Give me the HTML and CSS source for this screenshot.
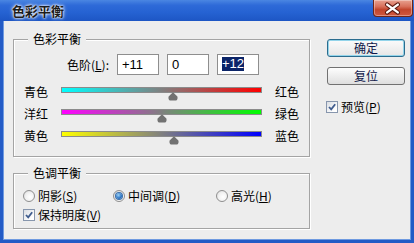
FILE: index.html
```html
<!DOCTYPE html>
<html>
<head>
<meta charset="utf-8">
<link rel="stylesheet" href="styles.css">
</head>
<body>
<div class="window">
  <div class="titlebar">
    <span class="title">色彩平衡</span>
    <div class="close">
      <svg width="40" height="17" viewBox="0 0 40 17">
        <path d="M14.5 4.5 L25.5 12.5 M25.5 4.5 L14.5 12.5" stroke="#5a1a12" stroke-width="4.5" stroke-linecap="round" fill="none"/>
        <path d="M14.5 4.5 L25.5 12.5 M25.5 4.5 L14.5 12.5" stroke="#ffffff" stroke-width="2.4" stroke-linecap="round" fill="none"/>
      </svg>
    </div>
  </div>
  <div class="frame">
    <div class="main">
      <div class="group g1">
        <div class="legend">色彩平衡</div>
        <div class="levels">
          <span class="lvl-label">色阶(<u>L</u>):</span>
          <div class="field">+11</div>
          <div class="field">0</div>
          <div class="field"><span class="sel">+12</span></div>
        </div>
        <div class="srow first">
          <span class="sl">青色</span>
          <div class="track-wrap">
            <div class="track t-cr"></div>
            <div class="thumb" style="left:55.5%"><svg width="10" height="9" viewBox="0 0 10 9"><path d="M5 0.3 L9.4 4.6 Q10.2 8.6 7 8.6 L3 8.6 Q-0.2 8.6 0.6 4.6 Z" fill="#727272"/></svg></div>
          </div>
          <span class="sr">红色</span>
        </div>
        <div class="srow">
          <span class="sl">洋红</span>
          <div class="track-wrap">
            <div class="track t-mg"></div>
            <div class="thumb" style="left:50%"><svg width="10" height="9" viewBox="0 0 10 9"><path d="M5 0.3 L9.4 4.6 Q10.2 8.6 7 8.6 L3 8.6 Q-0.2 8.6 0.6 4.6 Z" fill="#727272"/></svg></div>
          </div>
          <span class="sr">绿色</span>
        </div>
        <div class="srow">
          <span class="sl">黄色</span>
          <div class="track-wrap">
            <div class="track t-yb"></div>
            <div class="thumb" style="left:56%"><svg width="10" height="9" viewBox="0 0 10 9"><path d="M5 0.3 L9.4 4.6 Q10.2 8.6 7 8.6 L3 8.6 Q-0.2 8.6 0.6 4.6 Z" fill="#727272"/></svg></div>
          </div>
          <span class="sr">蓝色</span>
        </div>
      </div>
      <div class="group g2">
        <div class="legend">色调平衡</div>
        <div class="radios">
          <div class="ritem w1"><span class="radio"></span><span>阴影(<u>S</u>)</span></div>
          <div class="ritem w2"><span class="radio on"></span><span>中间调(<u>D</u>)</span></div>
          <div class="ritem"><span class="radio"></span><span>高光(<u>H</u>)</span></div>
        </div>
        <div class="crow">
          <span class="cbox"><svg width="10" height="10" viewBox="0 0 10 10"><path d="M2 5 L4.2 7.4 L8.2 2.2" stroke="#3f5c8e" stroke-width="1.8" fill="none"/></svg></span>
          <span>保持明度(<u>V</u>)</span>
        </div>
      </div>
    </div>
    <div class="side">
      <div class="btn default">确定</div>
      <div class="btn reset">复位</div>
      <div class="crow preview">
        <span class="cbox"><svg width="10" height="10" viewBox="0 0 10 10"><path d="M2 5 L4.2 7.4 L8.2 2.2" stroke="#3f5c8e" stroke-width="1.8" fill="none"/></svg></span>
        <span>预览(<u>P</u>)</span>
      </div>
    </div>
  </div>
</div>
</body>
</html>
```

FILE: styles.css
```css
* { box-sizing: border-box; }
html, body { margin: 0; padding: 0; }
body {
  width: 414px;
  height: 243px;
  overflow: hidden;
  font-family: "Noto Sans CJK SC", "Liberation Sans", sans-serif;
  font-size: 12px;
  color: #000;
  background: #ededed;
}
u { text-decoration: underline; text-underline-offset: 1px; }

.window { width: 414px; height: 243px; display: flex; flex-direction: column; }

.titlebar {
  height: 21px;
  display: flex;
  justify-content: space-between;
  align-items: flex-start;
  background: linear-gradient(#4a86e2 0%, #2e6ad8 25%, #2562d2 60%, #1d56c4 100%);
}
.title {
  padding-left: 12px;
  line-height: 21px;
  font-size: 13px;
  font-weight: bold;
  color: #1c1c1c;
  text-shadow: 0 0 2px #fff, 0 0 3px rgba(255,255,255,0.9), 0 0 5px rgba(255,255,255,0.6);
}
.close {
  width: 40px;
  height: 17px;
  margin-right: 1px;
  border: 1px solid #6d2418;
  border-top: 0;
  border-radius: 0 0 4px 4px;
  background: linear-gradient(#e8a190 0%, #d8715c 40%, #c2452c 60%, #d0583f 100%);
  box-shadow: inset 0 0 0 1px rgba(255,255,255,0.35);
  display: flex;
  overflow: hidden;
}
.close svg { margin-left: -1px; }

.frame {
  flex: 1;
  display: flex;
  align-items: flex-start;
  border: 3px solid #235bc6;
  border-top: 0;
  background: #ededed;
  box-shadow: inset 1px 0 0 #6f9ae0, inset -1px 0 0 #6f9ae0, inset 0 -1px 0 #6f9ae0;
}

.main { margin-left: 10px; width: 297px; }

.group {
  border: 1px solid #a4a4a4;
  box-shadow: inset 1px 1px 0 #fff, 1px 1px 0 #fff;
}
.g1 { margin-top: 18px; padding-bottom: 5px; }
.g2 { margin-top: 16px; padding-bottom: 5px; }

.legend {
  display: table;
  margin: -8px 0 0 14px;
  padding: 0 5px;
  line-height: 14px;
  background: #ededed;
}

.levels { display: flex; margin-top: 8px; height: 21px; }
.lvl-label {
  width: 95px;
  margin-right: 8px;
  text-align: right;
  line-height: 21px;
}
.field {
  width: 42px;
  height: 21px;
  margin-right: 8px;
  padding-left: 4px;
  border: 1px solid #8e8e8e;
  background: #fff;
  font-family: "Liberation Sans", Arial, sans-serif;
  font-size: 13px;
  line-height: 19px;
}
.sel {
  display: inline-block;
  background: #0b2468;
  color: #fff;
  line-height: 14px;
  vertical-align: 1px;
}

.srow { display: flex; height: 22px; }
.srow.first { margin-top: 10px; }
.sl { width: 37px; margin-left: 10px; line-height: 14px; }
.sr { margin-left: 13px; line-height: 14px; }
.track-wrap { width: 201px; height: 22px; position: relative; }
.track {
  margin-top: 2px;
  height: 6px;
  border: 1px solid #8b8b8b;
}
.t-cr { background: linear-gradient(to right, #00ffff, #ff0000); }
.t-mg { background: linear-gradient(to right, #ff00ff, #00ff00); }
.t-yb { background: linear-gradient(to right, #ffff00, #0000ff); }
.thumb {
  position: absolute;
  top: 7px;
  width: 10px;
  height: 9px;
  margin-left: -5px;
}
.thumb svg { display: block; }

.radios { display: flex; margin-top: 8px; padding-left: 9px; height: 16px; }
.ritem { display: flex; align-items: center; gap: 3px; line-height: 16px; }
.w1 { width: 90px; }
.w2 { width: 103px; }
.radio {
  width: 12px;
  height: 12px;
  border-radius: 50%;
  border: 1px solid #8f8f8f;
  background: radial-gradient(circle at 60% 60%, #ffffff 0%, #f2f2f2 50%, #d4d4d4 100%);
  display: flex;
  align-items: center;
  justify-content: center;
}
.radio.on::after {
  content: "";
  width: 6px;
  height: 6px;
  border-radius: 50%;
  background: radial-gradient(circle at 40% 35%, #9fd3f5 0%, #2f79c8 55%, #174f97 100%);
  box-shadow: 0 0 0 1px #3a6ea8;
}

.crow { display: flex; align-items: center; gap: 3px; line-height: 16px; height: 16px; }
.g2 .crow { margin-top: 3px; padding-left: 9px; }
.cbox {
  width: 12px;
  height: 12px;
  border: 1px solid #8796ad;
  background: linear-gradient(135deg, #d9dde3 0%, #ffffff 80%);
  display: flex;
  align-items: center;
  justify-content: center;
}
.cbox svg { display: block; }

.side { margin-left: 17px; padding-top: 18px; width: 78px; }
.btn {
  width: 78px;
  height: 18px;
  border-radius: 3px;
  text-align: center;
  line-height: 16px;
  color: #10184a;
}
.default {
  border: 1px solid #2b6c8e;
  background: linear-gradient(#fbfbfb, #e6e6e6);
  box-shadow: inset 0 0 0 1px #93d4ea;
}
.reset {
  margin-top: 10px;
  border: 1px solid #717171;
  background: linear-gradient(#fdfdfd, #dedede);
}
.preview { margin-top: 14px; margin-left: -1px; }
```
